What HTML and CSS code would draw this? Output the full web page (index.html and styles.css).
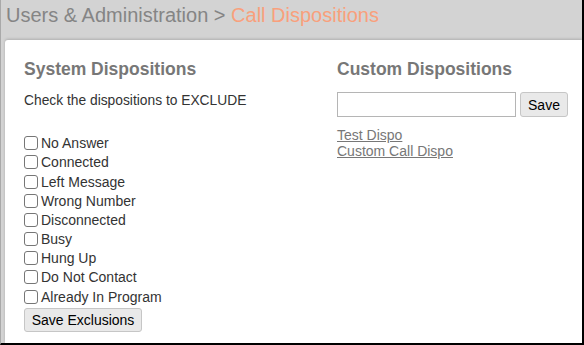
FILE: index.html
```html
<!DOCTYPE html>
<html>
<head>
<meta charset="utf-8">
<link rel="stylesheet" href="styles.css">
</head>
<body>
<div class="frame">
  <h1 class="crumb">Users &amp; Administration &gt; <span class="current">Call Dispositions</span></h1>
  <div class="card">
    <section class="col col-system">
      <h2 class="title">System Dispositions</h2>
      <p class="hint">Check the dispositions to EXCLUDE</p>
      <div class="list">
        <label class="row"><input type="checkbox" class="cb">No Answer</label>
        <label class="row"><input type="checkbox" class="cb">Connected</label>
        <label class="row"><input type="checkbox" class="cb">Left Message</label>
        <label class="row"><input type="checkbox" class="cb">Wrong Number</label>
        <label class="row"><input type="checkbox" class="cb">Disconnected</label>
        <label class="row"><input type="checkbox" class="cb">Busy</label>
        <label class="row"><input type="checkbox" class="cb">Hung Up</label>
        <label class="row"><input type="checkbox" class="cb">Do Not Contact</label>
        <label class="row"><input type="checkbox" class="cb">Already In Program</label>
      </div>
      <button class="btn btn-excl">Save Exclusions</button>
    </section>
    <section class="col col-custom">
      <h2 class="title">Custom Dispositions</h2>
      <div class="add">
        <input type="text" class="field">
        <button class="btn btn-save">Save</button>
      </div>
      <div class="links">
        <a href="#" class="link">Test Dispo</a>
        <a href="#" class="link">Custom Call Dispo</a>
      </div>
    </section>
  </div>
</div>
</body>
</html>
```

FILE: styles.css
```css
html, body {
  margin: 0;
  padding: 0;
}
body {
  font-family: "Liberation Sans", Arial, sans-serif;
  background: #d3d3d3;
}
.frame {
  width: 584px;
  height: 345px;
  box-sizing: border-box;
  background: #d3d3d3;
  border-left: 1px solid #a9a9a9;
  border-right: 2px solid #000;
  border-bottom: 2px solid #000;
  display: flex;
  flex-direction: column;
}
.crumb {
  margin: 0;
  height: 40px;
  box-sizing: border-box;
  padding: 4px 0 0 5px;
  font-size: 20px;
  line-height: 23px;
  font-weight: normal;
  color: #858585;
  white-space: nowrap;
}
.current {
  color: #f9a07c;
}
.card {
  flex: 1;
  margin-left: 4px;
  background: #fff;
  border-radius: 3px 0 0 0;
  box-shadow: 0 -1px 3px rgba(0, 0, 0, 0.18);
  display: grid;
  grid-template-columns: 313px 1fr;
  padding: 19px 0 0 19px;
  box-sizing: border-box;
}
.title {
  margin: 0;
  font-size: 17.5px;
  line-height: 20px;
  font-weight: bold;
  color: #777;
}
.hint {
  margin: 14.4px 0 0;
  font-size: 13.8px;
  line-height: 16px;
  color: #333;
}
.list {
  margin-top: 24.2px;
  display: flex;
  flex-direction: column;
}
.row {
  height: 19.2px;
  display: flex;
  align-items: center;
  font-size: 14px;
  line-height: 16px;
  color: #333;
}
.cb {
  -webkit-appearance: none;
  appearance: none;
  width: 14px;
  height: 14px;
  box-sizing: border-box;
  border: 1px solid #767676;
  border-radius: 3px;
  background: #fff;
  margin: 0 3px 0 0;
  flex: none;
}
.btn {
  font-family: "Liberation Sans", Arial, sans-serif;
  font-size: 14px;
  color: #000;
  background: #e9e9e9;
  border: 1px solid #c6c6c6;
  border-radius: 3px;
  padding: 0;
}
.btn-excl {
  margin-top: 1.6px;
  width: 118px;
  height: 24px;
}
.add {
  margin-top: 13px;
  display: flex;
  gap: 4px;
}
.field {
  width: 179px;
  height: 25px;
  box-sizing: border-box;
  border: 1px solid #b5b5b5;
  margin: 0;
  padding: 0 4px;
}
.btn-save {
  width: 48px;
  height: 25px;
}
.links {
  margin-top: 11.3px;
  display: flex;
  flex-direction: column;
  align-items: flex-start;
}
.link {
  font-size: 14px;
  line-height: 15.5px;
  color: #777;
  text-decoration: underline;
}
```
